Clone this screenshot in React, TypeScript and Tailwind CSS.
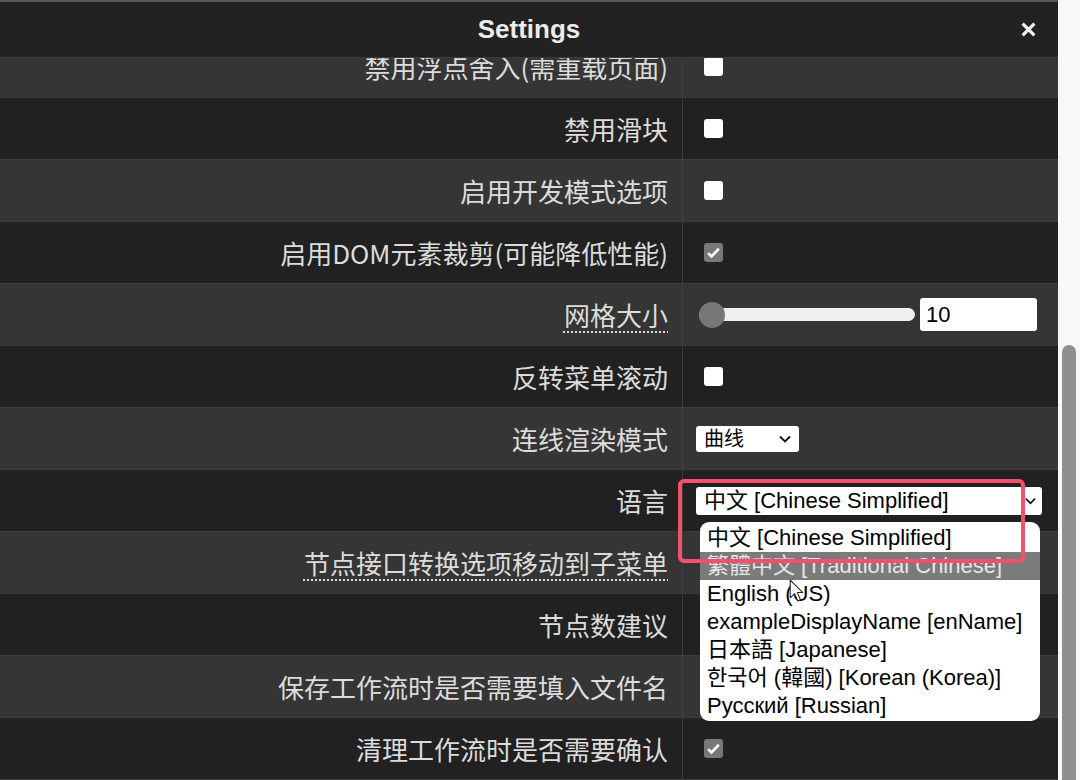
import React from 'react';

type Row = {
  label: string;
  kind: 'check' | 'checked' | 'slider' | 'curve' | 'lang' | 'none';
  dotted?: boolean;
};

const rows: Row[] = [
  { label: '禁用浮点舍入(需重载页面)', kind: 'check' },
  { label: '禁用滑块', kind: 'check' },
  { label: '启用开发模式选项', kind: 'check' },
  { label: '启用DOM元素裁剪(可能降低性能)', kind: 'checked' },
  { label: '网格大小', kind: 'slider', dotted: true },
  { label: '反转菜单滚动', kind: 'check' },
  { label: '连线渲染模式', kind: 'curve' },
  { label: '语言', kind: 'lang' },
  { label: '节点接口转换选项移动到子菜单', kind: 'none', dotted: true },
  { label: '节点数建议', kind: 'none' },
  { label: '保存工作流时是否需要填入文件名', kind: 'none' },
  { label: '清理工作流时是否需要确认', kind: 'checked' },
];

const languages = [
  '中文 [Chinese Simplified]',
  '繁體中文 [Traditional Chinese]',
  'English (US)',
  'exampleDisplayName [enName]',
  '日本語 [Japanese]',
  '한국어 (韓國) [Korean (Korea)]',
  'Русский [Russian]',
];

const uiFont = 'font-["Liberation_Sans","Noto_Sans_CJK_SC","Noto_Sans_CJK_KR",sans-serif]';

function Chevron({ className }: { className?: string }) {
  return (
    <svg viewBox="0 0 12 8" className={className} fill="none" stroke="#111" strokeWidth="1.8">
      <path d="M1 1.5l5 5 5-5" />
    </svg>
  );
}

function Checkbox({ checked }: { checked?: boolean }) {
  if (checked) {
    return (
      <div className="ml-[21px] w-[19px] h-[19px] rounded-[3px] bg-[#787878] flex items-center justify-center">
        <svg viewBox="0 0 14 14" className="w-[15px] h-[15px]" fill="none" stroke="#fff" strokeWidth="2.4">
          <path d="M2 7.5l3.2 3.2L12 3.5" />
        </svg>
      </div>
    );
  }
  return <div className="ml-[21px] w-[19px] h-[19px] rounded-[3px] bg-white" />;
}

function LanguageSelect() {
  return (
    <div className="relative ml-[13px] w-[346px]">
      <div className={`h-[28px] bg-white rounded-[3px] flex items-center pl-[8px] pr-[6px] text-[22px] text-black ${uiFont}`}>
        <span className="flex-1 leading-none">中文 [Chinese Simplified]</span>
        <Chevron className="w-[11px] h-[8px]" />
      </div>

      {/* open options list */}
      <div className={`absolute left-[4px] top-[35px] w-[340px] bg-white rounded-[9px] pt-[2px] pb-[1px] z-10 ${uiFont}`}>
        {languages.map((lang, i) => (
          <div
            key={lang}
            className={`h-[28px] flex items-center pl-[7px] text-[22px] leading-none whitespace-nowrap ${
              i === 1 ? 'bg-[#7b7b7b] text-[#e6e6e6]' : 'text-black'
            }`}
          >
            {lang}
          </div>
        ))}
      </div>

      {/* annotation box */}
      <div className="absolute -left-[18px] -top-[8px] w-[347px] h-[84px] border-[4px] border-[#f4506c] rounded-[6px] z-20" />

      {/* mouse pointer */}
      <svg viewBox="0 0 14 22" className="absolute left-[93px] top-[92px] w-[15px] h-[23px] z-20">
        <path d="M1 1v17l4.2-4 3 7 2.6-1.2-3-6.8H13z" fill="#fff" stroke="#222" strokeWidth="1" strokeLinejoin="round" />
      </svg>
    </div>
  );
}

function Value({ kind }: { kind: Row['kind'] }) {
  switch (kind) {
    case 'check':
      return <Checkbox />;
    case 'checked':
      return <Checkbox checked />;
    case 'slider':
      return (
        <div className="flex items-center ml-[16px]">
          <div className="w-[216px] h-[13px] rounded-full bg-[#efefef] flex items-center">
            <div className="w-[26px] h-[26px] rounded-full bg-[#777] shrink-0" />
          </div>
          <div className={`ml-[5px] w-[117px] h-[33px] bg-white rounded-[3px] flex items-center pl-[6px] text-[22px] text-black ${uiFont}`}>
            10
          </div>
        </div>
      );
    case 'curve':
      return (
        <div className={`ml-[13px] w-[103px] h-[26px] bg-white rounded-[3px] flex items-center pl-[8px] pr-[8px] text-[20px] text-black ${uiFont}`}>
          <span className="flex-1 leading-none">曲线</span>
          <Chevron className="w-[12px] h-[8px]" />
        </div>
      );
    case 'lang':
      return <LanguageSelect />;
    default:
      return null;
  }
}

export default function App() {
  return (
    <div className="w-[1080px] h-[780px] flex overflow-hidden bg-[#222]">
      <div className="flex-1 min-w-0 flex flex-col border-t-2 border-[#585858]">
        {/* Header */}
        <div className="h-[56px] shrink-0 flex items-center justify-center relative bg-[#222] border-b border-[#3a3a3a] z-30">
          <h1 className="text-[26px] font-bold text-[#ececec] font-['Liberation_Sans',Arial,sans-serif]">Settings</h1>
          <svg viewBox="0 0 14 14" className="absolute right-[22px] top-[20px] w-[15px] h-[15px]" stroke="#f2f2f2" strokeWidth="3">
            <path d="M1.5 1.5l11 11M12.5 1.5l-11 11" />
          </svg>
        </div>

        {/* Rows, scrolled a little */}
        <div className="flex-1 overflow-hidden">
          <div className="-mt-[22px]">
            {rows.map((row, i) => (
              <div
                key={row.label}
                className={`h-[62px] flex border-b border-[#3d3d3d] ${i % 2 === 0 ? 'bg-[#353535]' : 'bg-[#212121]'}`}
              >
                <div className="w-[683px] shrink-0 flex items-center justify-end pr-[14px] border-r border-[#3d3d3d]">
                  <span
                    className={`text-[26px] leading-none text-[#dcdcdc] whitespace-nowrap font-['Noto_Sans_CJK_SC',sans-serif] ${
                      row.dotted ? 'underline decoration-dotted decoration-2 underline-offset-[6px]' : ''
                    }`}
                  >
                    {row.label}
                  </span>
                </div>
                <div className="flex-1 flex items-center">
                  <Value kind={row.kind} />
                </div>
              </div>
            ))}
          </div>
        </div>
      </div>

      {/* Scrollbar */}
      <div className="w-[22px] shrink-0 bg-[#f8f8f8] flex flex-col items-center">
        <svg viewBox="0 0 12 8" className="mt-[12px] w-[12px] h-[8px]">
          <path d="M6 0L12 8H0z" fill="#a3a3a3" />
        </svg>
        <div className="mt-[333px] w-[14px] h-[460px] shrink-0 rounded-full bg-[#8f8f8f]" />
      </div>
    </div>
  );
}
